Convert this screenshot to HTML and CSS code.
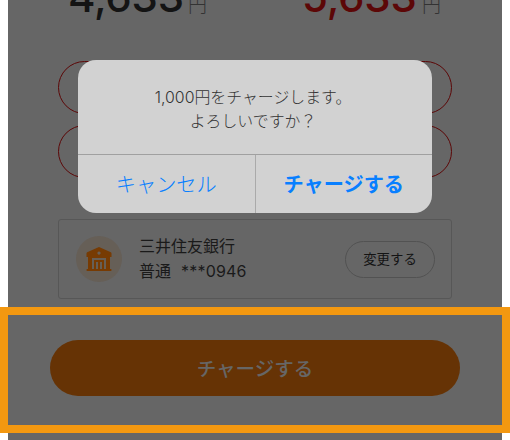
FILE: index.html
```
<!DOCTYPE html>
<html lang="ja">
<head>
<meta charset="utf-8">
<title>チャージ</title>
<link rel="stylesheet" href="styles.css">
</head>
<body>
<main class="screen">
  <div class="amounts">
    <div class="amount"><span class="num">4,633</span><span class="yen">円</span></div>
    <div class="amount amount-after"><span class="num">5,633</span><span class="yen">円</span></div>
  </div>
  <div class="options">
    <div class="option"></div>
    <div class="option"></div>
  </div>
  <section class="bank">
    <div class="bank-icon">
      <svg width="26" height="24" viewBox="0 0 26 24" fill="#773b03">
        <path fill-rule="evenodd" d="M13 0 L24.8 5.2 Q25.5 5.6 25.5 6.4 V10 H24 V22 H25 Q25.5 22 25.5 23 T25 24 H1 Q.5 24 .5 23 T1 22 H2 V10 H.5 V6.4 Q.5 5.6 1.2 5.2 Z M13 4.5 a1.6 1.6 0 1 0 .01 0 Z M6 11 V22 H20 V11 Z"/>
        <path d="M8 13 H18 V22 H16 V15 H14 V22 H12 V15 H10 V22 H8 Z"/>
      </svg>
    </div>
    <div class="bank-text"><div>三井住友銀行</div><div>普通<span class="account">***0946</span></div></div>
    <button class="change">変更する</button>
  </section>
  <button class="charge">チャージする</button>
</main>
<div class="dialog">
  <p class="message">1,000円をチャージします。<br>よろしいですか？</p>
  <div class="actions">
    <button class="cancel">キャンセル</button>
    <button class="confirm">チャージする</button>
  </div>
</div>
<div class="highlight"></div>
</body>
</html>
```
FILE: styles.css
```
* { box-sizing: border-box; }
body {
  margin: 0;
  height: 440px;
  position: relative;
  overflow: hidden;
  background: #fff;
  font-family: Inter, "Noto Sans CJK JP", sans-serif;
}
button {
  padding: 0;
  border: 0;
  background: none;
  font-family: inherit;
}
.screen {
  width: 494px;
  height: 440px;
  margin: 0 auto;
  padding: 0 42px;
  background: #666;
  overflow: hidden;
}
.amounts {
  display: flex;
  height: 61px;
  padding-left: 18px;
}
.amount {
  display: flex;
  align-items: baseline;
  width: 234px;
  height: 50px;
  margin-top: -28px;
  flex: none;
  line-height: 50px;
  color: #141414;
}
.amount-after { color: #5c0707; }
.num { font-size: 42px; font-weight: 500; width: 120px; letter-spacing: -.2px; }
.yen { font-size: 19px; font-weight: 300; color: #333; }
.options {
  display: grid;
  gap: 11px;
  padding: 0 8px;
}
.option {
  height: 53px;
  border: 1px solid #5c0707;
  border-radius: 27px;
}
.bank {
  display: flex;
  align-items: center;
  height: 80px;
  margin: 41px 8px 0;
  padding: 0 16px 0 17px;
  border: 1px solid #575757;
  border-radius: 3px;
}
.bank-icon {
  display: flex;
  align-items: center;
  justify-content: center;
  width: 46px;
  height: 46px;
  border-radius: 50%;
  background: #665f57;
}
.bank-text {
  flex: 1;
  margin-left: 17px;
  font-size: 16px;
  line-height: 25px;
  color: #1a1a1a;
}
.account { margin-left: 10px; letter-spacing: .2px; }
.change {
  width: 90px;
  height: 37px;
  padding-bottom: 3px;
  border: 1px solid #525252;
  border-radius: 19px;
  font-size: 13.4px;
  color: #141414;
}
.charge {
  display: block;
  width: 410px;
  height: 56px;
  margin-top: 41px;
  padding-bottom: 2px;
  border-radius: 28px;
  background: #663305;
  color: #666;
  font-size: 19.5px;
  font-weight: 500;
}
.dialog {
  position: absolute;
  left: 78px;
  top: 60px;
  width: 354px;
  height: 153px;
  border-radius: 18px;
  background: #d2d2d2;
  overflow: hidden;
}
.message {
  height: 94px;
  margin: 0;
  padding: 26px 4px 0 0;
  text-align: center;
  font-size: 15.9px;
  font-weight: 300;
  line-height: 24px;
  color: #333;
}
.actions {
  display: flex;
  height: 59px;
  border-top: 1px solid #a0a0a0;
}
.actions button {
  flex: 1;
  padding-bottom: 2px;
  color: #087fff;
  font-size: 20.2px;
}
.actions .cancel { border-right: 1px solid #aaa; font-weight: 300; }
.actions .confirm { font-weight: 700; }
.highlight {
  position: absolute;
  left: 0;
  top: 307px;
  width: 510px;
  height: 126px;
  border: 8px solid #f39810;
}
```
